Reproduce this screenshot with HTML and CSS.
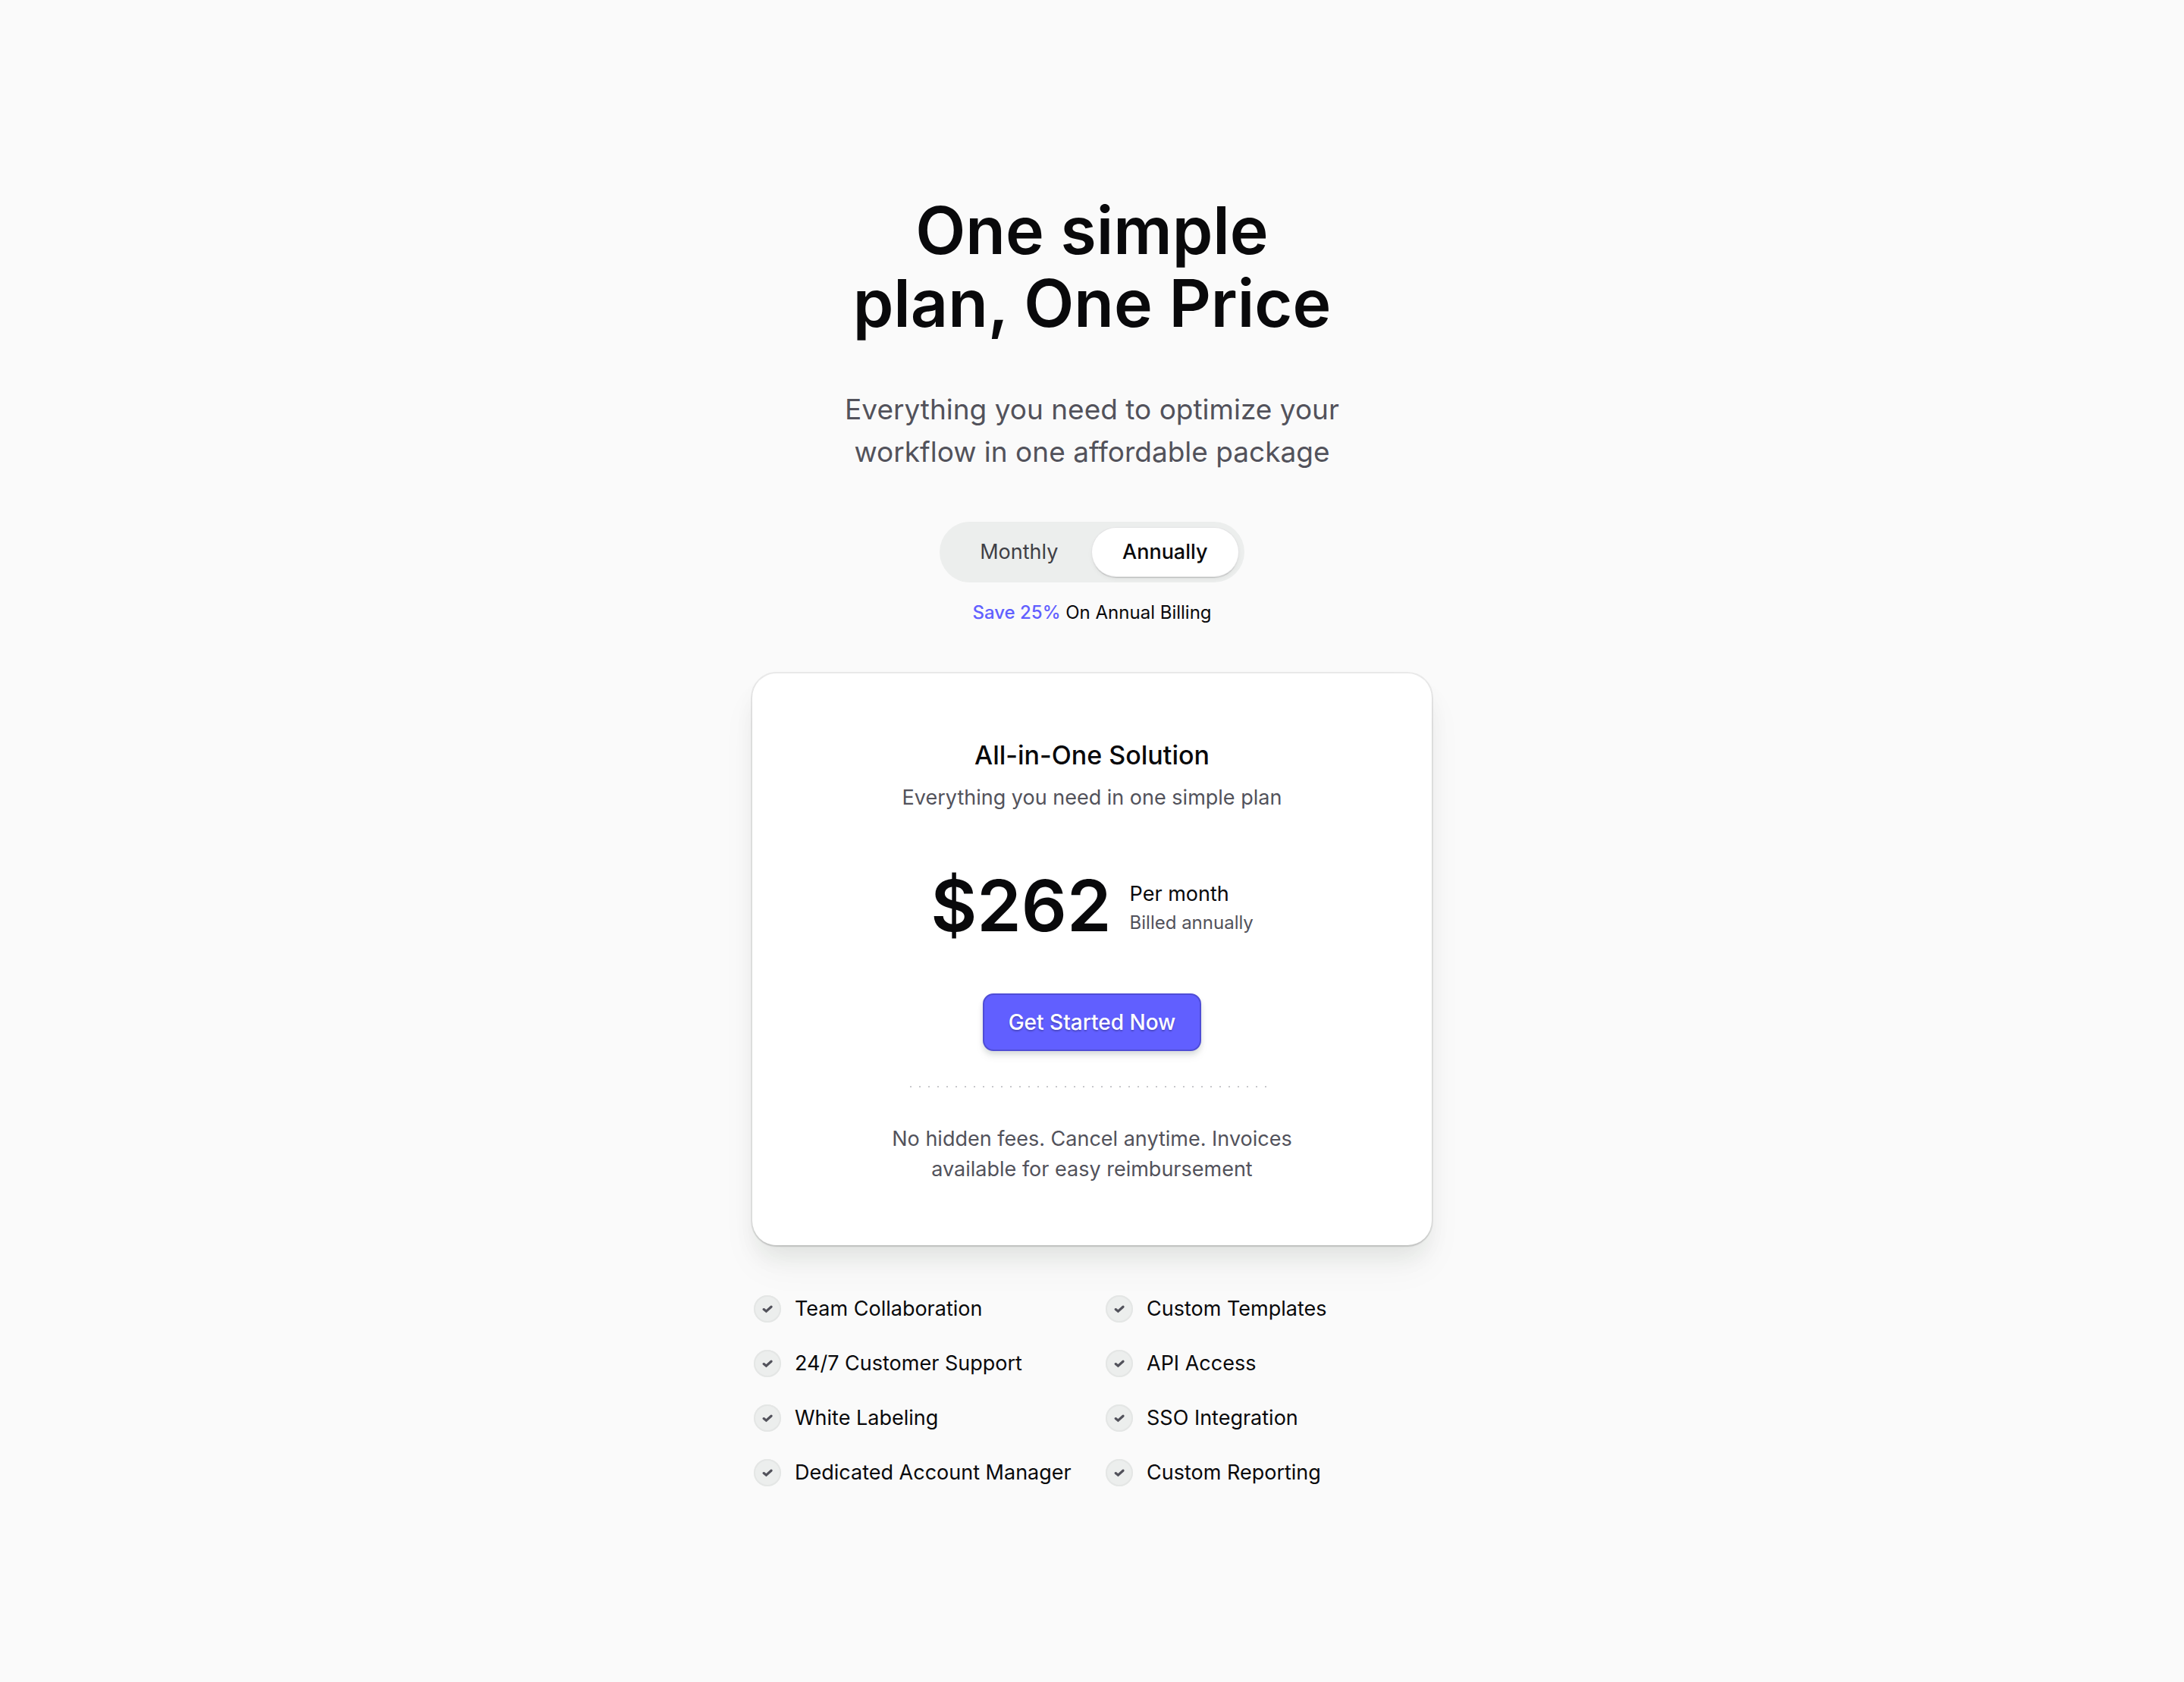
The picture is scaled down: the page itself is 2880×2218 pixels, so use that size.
FILE: index.html
```html
<!DOCTYPE html>
<html lang="en">
<head>
    <meta charset="UTF-8">
    <meta name="viewport" content="width=device-width, initial-scale=1.0">
    <title>Pricing</title>
    <link rel="stylesheet" href="styles.css">
</head>
<body>
    <!-- Shared check icon -->
    <svg class="sprite" aria-hidden="true">
        <symbol id="check" viewBox="0 0 36 36">
            <path d="M13.2 18.6l3.2 2.6 6.6-6" fill="none" stroke="currentColor" stroke-width="3.2" stroke-linecap="round" stroke-linejoin="miter"/>
        </symbol>
    </svg>
    <main class="pricing">
        <header class="intro">
            <h1>One simple<br>plan, One Price</h1>
            <p>Everything you need to optimize your<br>workflow in one affordable package</p>
        </header>
        <div class="billing">
            <div class="toggle" role="radiogroup" aria-label="Billing period">
                <label><input type="radio" name="period" value="monthly"><span>Monthly</span></label>
                <label><input type="radio" name="period" value="annually" checked><span>Annually</span></label>
            </div>
            <p class="save"><strong>Save 25%</strong> On Annual Billing</p>
        </div>
        <section class="card">
            <h2>All-in-One Solution</h2>
            <p class="desc">Everything you need in one simple plan</p>
            <div class="price">
                <span class="amount">$262</span>
                <div class="term">
                    <p>Per month</p>
                    <p class="billed">Billed annually</p>
                </div>
            </div>
            <button type="button" class="cta">Get Started Now</button>
            <div class="dots"></div>
            <p class="note">No hidden fees. Cancel anytime. Invoices<br>available for easy reimbursement</p>
        </section>
        <ul class="features">
            <li><svg class="check"><use href="#check"/></svg>Team Collaboration</li>
            <li><svg class="check"><use href="#check"/></svg>Custom Templates</li>
            <li><svg class="check"><use href="#check"/></svg>24/7 Customer Support</li>
            <li><svg class="check"><use href="#check"/></svg>API Access</li>
            <li><svg class="check"><use href="#check"/></svg>White Labeling</li>
            <li><svg class="check"><use href="#check"/></svg>SSO Integration</li>
            <li><svg class="check"><use href="#check"/></svg>Dedicated Account Manager</li>
            <li><svg class="check"><use href="#check"/></svg>Custom Reporting</li>
        </ul>
    </main>
</body>
</html>
```
FILE: styles.css
```css
* {
    box-sizing: border-box;
}
body {
    margin: 0;
    background: #fafafa;
    color: #09090b;
    font-family: Inter, "Liberation Sans", sans-serif;
    font-size: 27px;
    line-height: 40px;
}
h1, h2, p, ul {
    margin: 0;
    padding: 0;
}
.sprite {
    display: none;
}
.pricing {
    max-width: 960px;
    margin: 0 auto;
    padding: 256px 32px;
}
.intro {
    text-align: center;
}
.intro h1 {
    font-size: 86px;
    font-weight: 600;
    line-height: 96px;
}
.intro p {
    margin-top: 64px;
    color: #52525b;
    font-size: 37px;
    line-height: 56px;
}
.billing {
    display: flex;
    flex-direction: column;
    align-items: center;
    gap: 24px;
    margin-top: 64px;
}
.toggle {
    display: grid;
    grid-template-columns: 1fr 1fr;
    padding: 8px;
    border-radius: 40px;
    background: #eceeed;
}
.toggle label {
    cursor: pointer;
}
.toggle input {
    position: absolute;
    opacity: 0;
}
.toggle span {
    display: block;
    padding: 12px 40px;
    border-radius: 32px;
    color: #3f3f46;
    text-align: center;
}
.toggle input:checked + span {
    background: #fff;
    color: #09090b;
    font-weight: 500;
    box-shadow: 0 0 0 1px #e4e4e5, 0 2px 1px rgba(9, 9, 11, 0.18), 0 3px 6px rgba(9, 9, 11, 0.06);
}
.toggle input:focus-visible + span {
    outline: 2px solid #615fff;
}
.save {
    font-size: 24px;
    line-height: 32px;
}
.save strong {
    color: #615fff;
    font-weight: 500;
}
.card {
    display: flex;
    flex-direction: column;
    align-items: center;
    margin-top: 64px;
    padding: 80px 32px;
    border-radius: 32px;
    background: #fff;
    text-align: center;
    box-shadow: 0 0 0 2px rgba(9, 9, 11, 0.07), 0 2px 2px rgba(9, 9, 11, 0.1), 0 20px 30px -6px rgba(20, 40, 30, 0.08), 0 30px 50px rgba(20, 40, 30, 0.04);
}
.card h2 {
    font-size: 34px;
    font-weight: 500;
    line-height: 56px;
}
.desc {
    margin-top: 8px;
}
.desc, .note {
    color: #52525b;
}
.price {
    display: flex;
    align-items: center;
    gap: 24px;
    margin-top: 74px;
}
.amount {
    font-size: 94px;
    font-weight: 600;
    line-height: 96px;
}
.term {
    padding-top: 6px;
    text-align: left;
}
.billed {
    color: #52525b;
    font-size: 24px;
    line-height: 36px;
}
.cta {
    margin-top: 68px;
    padding: 16px 32px;
    border: 2px solid #4f4dd6;
    border-radius: 14px;
    background: #615fff;
    color: #fff;
    font: inherit;
    font-size: 28px;
    font-weight: 500;
    text-shadow: 0 2px 2px rgba(9, 9, 11, 0.25);
    box-shadow: 0 4px 6px rgba(20, 40, 30, 0.12), 0 8px 12px rgba(20, 40, 30, 0.05);
    cursor: pointer;
}
.dots {
    width: 100%;
    max-width: 480px;
    height: 2px;
    margin: 46px 0 48px;
    background: repeating-linear-gradient(to right, #c8c8cc 0 2px, transparent 2px 12px);
}
.features {
    display: grid;
    grid-template-columns: 1fr 1fr;
    gap: 32px;
    margin-top: 64px;
    list-style: none;
}
.features li {
    display: flex;
    align-items: center;
    gap: 18px;
    padding-left: 2px;
    white-space: nowrap;
}
.check {
    flex: none;
    width: 36px;
    height: 36px;
    border-radius: 50%;
    background: #eceeed;
    box-shadow: inset 0 0 0 2px #e4e6e5;
    color: #52525b;
}
```
